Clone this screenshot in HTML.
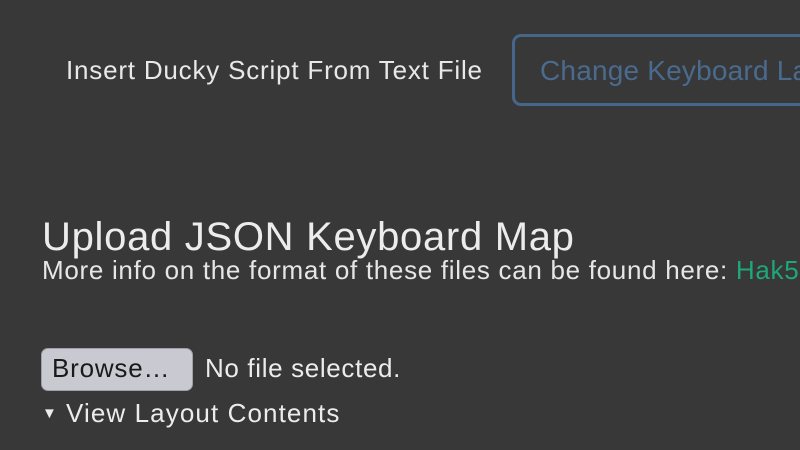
<!DOCTYPE html>
<html><head><style>
html,body{margin:0;padding:0;width:800px;height:450px;overflow:hidden;background:#383838;font-family:"Liberation Sans",sans-serif;color:#e6e6e6;}
.wrap{position:relative;width:800px;height:450px;overflow:hidden;}
.a{position:absolute;white-space:nowrap;}
</style></head><body><div class="wrap">
<div class="a" style="left:66px;top:55px;font-size:26px;letter-spacing:0.8px;color:#e8e8e8;">Insert Ducky Script From Text File</div>
<div class="a" style="left:512px;top:34px;width:288px;height:72px;border:3px solid #46678a;border-right:none;border-radius:9px 0 0 9px;box-sizing:border-box;"></div>
<div class="a" style="left:540px;top:55px;width:260px;overflow:hidden;font-size:28px;letter-spacing:0.2px;color:#4a6a8e;">Change Keyboard Layout</div>
<div class="a" style="left:42px;top:215px;font-size:40px;letter-spacing:0.7px;color:#ececec;">Upload JSON Keyboard Map</div>
<div class="a" style="left:42px;top:255px;width:758px;overflow:hidden;font-size:26px;letter-spacing:0.7px;color:#e6e6e6;">More info on the format of these files can be found here: <span style="color:#1fa67a">Hak5</span></div>
<div class="a" style="left:41px;top:348px;width:152px;height:43px;background:#c9c9d1;border-radius:7px;box-sizing:border-box;border:1px solid #a0a0a8;"></div>
<div class="a" style="left:52px;top:353px;font-size:26px;letter-spacing:0.8px;color:#1a1a1a;">Browse…</div>
<div class="a" style="left:205px;top:353px;font-size:26px;letter-spacing:0.65px;color:#ececec;">No file selected.</div>
<div class="a" style="left:42px;top:405px;font-size:15px;color:#ececec;">▼</div>
<div class="a" style="left:66px;top:398px;font-size:26px;letter-spacing:1.1px;color:#ececec;">View Layout Contents</div>
</div></body></html>
